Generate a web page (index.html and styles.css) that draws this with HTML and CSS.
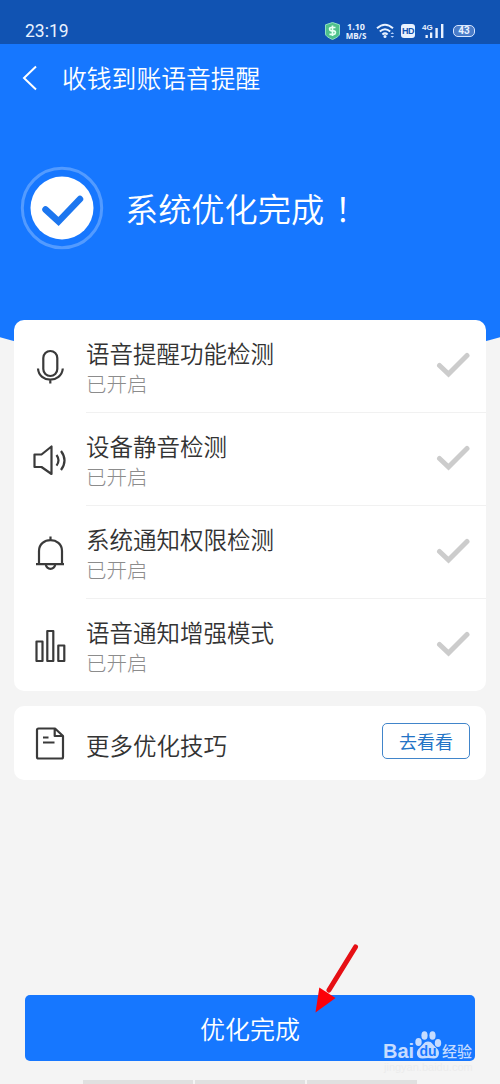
FILE: index.html
```html
<!DOCTYPE html>
<html lang="zh-CN">

<head>
    <meta charset="utf-8" />
    <title>收钱到账语音提醒</title>
    <link rel="stylesheet" href="styles.css">
</head>

<body>
    <div class="top">
        <div class="status">
            <span class="time">23:19</span>
            <div class="tray">
                <svg class="shield" width="15" height="18" viewBox="0 0 15 18">
                    <path d="M7.5 .5 14.5 2.8V12Q14.5 14.5 7.5 17.5Q.5 14.5 .5 12V2.8Z" fill="#4fc18b" stroke="#8fe0c0" />
                    <path d="M10.5 5.5H6.2Q4.6 5.5 4.6 7T6.2 8.8H8.8Q10.4 8.8 10.4 10.5T8.8 12.3H4.4M7.5 3.6V14" fill="none" stroke="#e6fff2" stroke-width="1.7" />
                </svg>
                <div class="speed">
                    <div class="num">1.10</div>
                    <div class="unit">MB/S</div>
                </div>
                <svg class="wifi" width="20" height="16" viewBox="0 0 20 16" fill="none" stroke="#e9f2ff" stroke-width="2">
                    <path d="M1 5.2Q9 -1.8 17 5.2M3.8 8.5Q9 4 14.2 8.5M6.4 11.5Q9 9.2 11.6 11.5" />
                    <circle cx="9" cy="13.6" r="1.5" fill="#e9f2ff" stroke="none" />
                    <path d="M14.5 11 16.3 9.2 18.1 11ZM14.5 13 16.3 14.8 18.1 13Z" fill="#b9d4ff" stroke="none" />
                </svg>
                <span class="hd">HD</span>
                <svg class="signal" width="21" height="16" viewBox="0 0 21 16" fill="#e9f2ff">
                    <text x="-1" y="7" class="net">4G</text>
                    <path d="M2.500 12h2.300v3H2.500zM7 9.500h2.300V15H7zM12.400 5h2.400v10h-2.400zM18 1h2.400v14H18z" />
                </svg>
                <span class="battery">43</span>
            </div>
        </div>
        <div class="nav">
            <svg width="16" height="26" viewBox="0 0 16 26" fill="none" stroke="#fff" stroke-width="2">
                <path d="M14 1.5 2 13 14 24.5" />
            </svg>
            <span class="title">收钱到账语音提醒</span>
        </div>
        <div class="hero">
            <svg width="84" height="84" viewBox="0 0 84 84">
                <circle cx="42" cy="42" r="39.7" fill="none" stroke="#539bff" stroke-width="3" />
                <circle cx="42" cy="42" r="31.5" fill="#fff" />
                <path d="M25.500 43.500 38.500 55.500 60 33" fill="none" stroke="#1c76ef" stroke-width="6.5" stroke-linecap="round" />
            </svg>
            <span class="done">系统优化完成<span class="mark" lang="zh-TW">！</span></span>
        </div>
    </div>

    <div class="card list">
        <div class="row">
            <svg class="icon" width="36" height="36" viewBox="0 0 36 36">
                <rect x="11.3" y="2" width="14" height="25" rx="7" />
                <path d="M6 19.5C7 34.3 29.5 34.3 30.8 19.5M18.3 30.5V34.5" />
            </svg>
            <div class="text">
                <div class="name">语音提醒功能检测</div>
                <div class="state">已开启</div>
            </div>
            <svg class="tick" width="34" height="28" viewBox="0 0 34 28"><path d="M3.5 14.5 12.5 23 31 4.5" /></svg>
        </div>
        <div class="row">
            <svg class="icon" width="36" height="36" viewBox="0 0 36 36">
                <path d="M2.5 12.5H9.5L19.5 4.5V32L9.5 25H2.5Z" />
                <path d="M24.500 13Q28.500 18.300 24.500 23.700M29 9Q36 18.300 29 28" />
            </svg>
            <div class="text">
                <div class="name">设备静音检测</div>
                <div class="state">已开启</div>
            </div>
            <svg class="tick" width="34" height="28" viewBox="0 0 34 28"><path d="M3.5 14.5 12.5 23 31 4.5" /></svg>
        </div>
        <div class="row">
            <svg class="icon" width="36" height="36" viewBox="0 0 36 36">
                <path d="M18.5 1.5V5M7 29V16C7 1.5 30 1.5 30 16V29M4 29.2H32M13.7 29.5C15 35.2 22 35.2 23.3 29.5" />
            </svg>
            <div class="text">
                <div class="name">系统通知权限检测</div>
                <div class="state">已开启</div>
            </div>
            <svg class="tick" width="34" height="28" viewBox="0 0 34 28"><path d="M3.5 14.5 12.5 23 31 4.5" /></svg>
        </div>
        <div class="row">
            <svg class="icon" width="36" height="36" viewBox="0 0 36 36">
                <path d="M4.5 13.5H10.5V33H4.5ZM15.3 3H21.3V33H15.3ZM26.3 17.5H32.3V33H26.3Z" />
            </svg>
            <div class="text">
                <div class="name">语音通知增强模式</div>
                <div class="state">已开启</div>
            </div>
            <svg class="tick" width="34" height="28" viewBox="0 0 34 28"><path d="M3.5 14.5 12.5 23 31 4.5" /></svg>
        </div>
    </div>

    <div class="card more">
        <svg class="icon" width="36" height="36" viewBox="0 0 36 36">
            <path d="M6.500 3.500H23L31 11V32Q31 33.500 29.500 33.500H6.500Q5 33.500 5 32V5Q5 3.500 6.500 3.500ZM22.700 3.500V11H31M11 12.500H16.500M11 17.500H22.500" />
        </svg>
        <span class="name">更多优化技巧</span>
        <a class="go">去看看</a>
    </div>

    <div class="finish">优化完成</div>
    <div class="keys"><i></i><i></i><i></i></div>

    <svg class="arrow" width="46" height="72" viewBox="0 0 46 72">
        <path d="M41.500 4 15 47" stroke="#e60f14" stroke-width="5" stroke-linecap="round" />
        <path d="M1.500 69.500 5.300 44.500 21.500 55Z" fill="#fc0009" />
    </svg>

    <div class="watermark">
        <span class="bai">Bai</span>
        <svg width="28" height="30" viewBox="0 0 28 30">
            <ellipse cx="4.500" cy="12" rx="3.200" ry="4" />
            <ellipse cx="10.500" cy="5.500" rx="3.100" ry="4.300" />
            <ellipse cx="18.500" cy="5.500" rx="3.100" ry="4.300" />
            <ellipse cx="24" cy="13" rx="3.200" ry="4" />
            <path d="M14 11.500C18 11.500 19 15 22.500 18C27 22 25 28.500 20 28.500Q14 27.500 8.500 28.500C2.500 28.500 1 22 5.500 18C9 15 10 11.500 14 11.500Z" />
            <text x="14" y="26" class="du">du</text>
        </svg>
        <span class="jy">经验</span>
    </div>
    <div class="site">jingyan.baidu.com</div>
</body>

</html>
```
FILE: styles.css
```css
body {
    margin: 0;
    height: 1084px;
    position: relative;
    overflow: hidden;
    background: #f4f4f4;
    font-family: "Noto Sans CJK SC", "Noto Sans", sans-serif;
    font-weight: 350;
    color: #333;
}

.top {
    height: 371px;
    background: #1677ff;
    color: #fff;
    clip-path: ellipse(600px 371px at 50% 0);
}

.status {
    height: 44px;
    box-sizing: border-box;
    padding: 17px 25px 0;
    background: #1153b2;
    display: flex;
    justify-content: space-between;
    color: #e9f2ff;
}

.time {
    font: 17.5px/28px Roboto, sans-serif;
}

.tray {
    height: 27px;
    display: flex;
    align-items: center;
}

.speed {
    width: 24px;
    margin-left: 4px;
    font-family: "Open Sans", sans-serif;
    font-weight: bold;
    text-align: center;
    white-space: nowrap;
}

.num {
    font-size: 9px;
    line-height: 9px;
}

.unit {
    padding-top: 1px;
    font-size: 8px;
    line-height: 8px;
}

.wifi {
    margin-left: 8px;
}

.hd {
    width: 14px;
    height: 14px;
    margin-left: 5px;
    border-radius: 3px;
    background: #e9f2ff;
    color: #1153b2;
    font: bold 9px/14px "Liberation Sans", sans-serif;
    letter-spacing: -0.5px;
    text-align: center;
}

.signal {
    margin-left: 8px;
    overflow: visible;
}

.net {
    font: bold 8px "Liberation Sans", sans-serif;
}

.battery {
    width: 20px;
    height: 10px;
    margin-left: 9px;
    border: 1.5px solid #d7e6ff;
    border-radius: 5px;
    background: #4a7cc8;
    font: bold 10px/10px Roboto, sans-serif;
    text-align: center;
}

.nav {
    height: 68px;
    padding-left: 22px;
    display: flex;
    align-items: center;
}

.title {
    margin: -3px 0 0 24px;
    font-size: 24.8px;
}

.hero {
    padding: 54px 0 0 20px;
    display: flex;
    align-items: center;
}

.done {
    margin: -2px 0 0 21px;
    font-size: 33.2px;
}

.mark {
    margin-left: 2px;
    font-family: "Noto Sans CJK TC", sans-serif;
}

.card {
    margin: 0 14px 15px;
    background: #fff;
    border-radius: 10px;
    position: relative;
}

.list {
    margin-top: -51px;
    height: 371px;
}

.row {
    height: 93px;
    padding-left: 18px;
    display: flex;
}

.icon {
    margin-top: 29px;
    fill: none;
    stroke: #3a3a3a;
    stroke-width: 2.2;
    stroke-linejoin: round;
    flex: none;
}

.text {
    flex: 1;
    margin-left: 18px;
    padding-top: 16px;
    border-bottom: 1px solid #f1f1f1;
}

.row:last-child .text {
    border-bottom: 0;
}

.name {
    font-size: 23.5px;
    line-height: 34px;
}

.state {
    font-size: 20.5px;
    font-weight: 300;
    line-height: 26px;
    color: #8c8c8c;
}

.tick {
    box-sizing: content-box;
    padding: 31px 16px 33px 0;
    border-bottom: 1px solid #f1f1f1;
    fill: none;
    stroke: #ccc;
    stroke-width: 5;
    stroke-linecap: round;
}

.row:last-child .tick {
    border-bottom: 0;
}

.more {
    height: 74px;
    margin-bottom: 215px;
    padding: 0 16px 0 18px;
    display: flex;
    align-items: center;
}

.more .icon {
    margin-top: 0;
}

.more .name {
    flex: 1;
    margin-left: 18px;
    padding-top: 3px;
}

.go {
    width: 86px;
    height: 34px;
    margin-top: -4px;
    border: 1.5px solid #4185ca;
    border-radius: 5px;
    font-size: 18px;
    font-weight: 400;
    line-height: 34px;
    text-align: center;
    color: #2374c6;
}

.finish {
    height: 66px;
    margin: 0 25px;
    border-radius: 5px;
    background: #1677ff;
    color: #fff;
    font-size: 25px;
    line-height: 67px;
    text-align: center;
}

.keys {
    margin: 19px 83px 0;
    display: flex;
    gap: 2px;
}

.keys i {
    flex: 1;
    height: 4px;
    background: #e0e0e0;
}

.arrow {
    position: absolute;
    left: 314px;
    top: 943px;
}

/* watermark sits over the button */
.watermark {
    position: absolute;
    left: 383px;
    top: 1030px;
    display: flex;
    fill: #c6dcff;
    color: #c6dcff;
}

.bai {
    width: 31px;
    font: bold 20px/42px "Liberation Sans", sans-serif;
}

.du {
    fill: #1677ff;
    font: bold 14px "Liberation Sans", sans-serif;
    text-anchor: middle;
}

.jy {
    font-size: 15px;
    font-weight: 500;
    line-height: 41px;
}

.site {
    position: absolute;
    left: 384px;
    top: 1060px;
    font: 11px/14px "Liberation Sans", sans-serif;
    color: #ececec;
}
```
